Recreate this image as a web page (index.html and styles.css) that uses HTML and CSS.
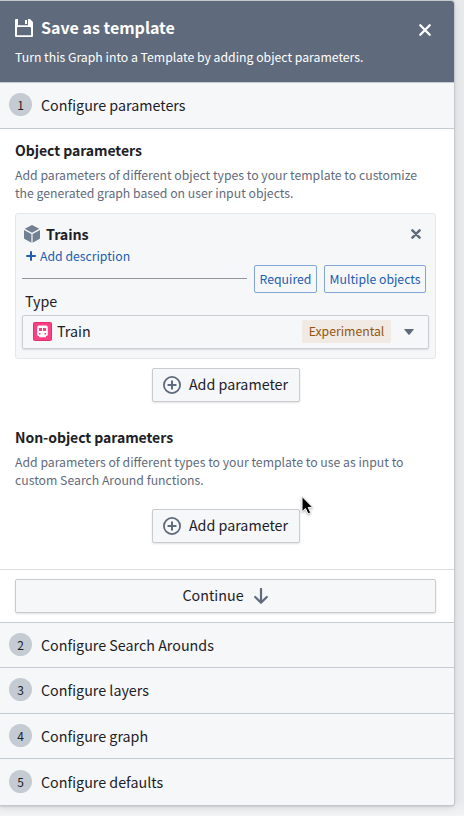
FILE: index.html
```
<!DOCTYPE html>
<html lang="en">
<head>
  <meta charset="UTF-8">
  <title>Save as template</title>
  <link rel="stylesheet" href="styles.css">
</head>
<body>
<div class="panel">
  <header class="panel-header">
    <div class="header-text">
      <h1>
        <svg class="save-icon" width="18" height="18" viewBox="0 0 18 18"><path fill="#fff" fill-rule="evenodd" d="M1 0h2v6.2h10V0h2l3 3v14a1 1 0 0 1-1 1H1a1 1 0 0 1-1-1V1a1 1 0 0 1 1-1zM2 9v7.2h14V9a1 1 0 0 0-1-1H3a1 1 0 0 0-1 1z"/><path fill="#fff" d="M10 1h2v4h-2z"/></svg>
        <span>Save as template</span>
      </h1>
      <p>Turn this Graph into a Template by adding object parameters.</p>
    </div>
    <button type="button" class="close-btn" aria-label="Close">
      <svg width="12" height="12" viewBox="0 0 12 12"><path d="M1.3 1.3l9.4 9.4M10.7 1.3l-9.4 9.4" stroke="#fff" stroke-width="2.3" stroke-linecap="round"/></svg>
    </button>
  </header>

  <div class="step"><span class="step-num">1</span>Configure parameters</div>

  <div class="step-body">
    <section class="object-params">
      <h2>Object parameters</h2>
      <p class="hint">Add parameters of different object types to your template to customize<br>the generated graph based on user input objects.</p>
      <div class="card">
        <div class="card-title">
          <svg width="16" height="18" viewBox="0 0 16 18"><path fill="#738091" d="M8 0l7.3 3.8L8 7.8.7 3.8zM0 4.9l7.4 4v8.8L.6 14a1.1 1.1 0 0 1-.6-1zM16 4.9l-7.4 4v8.8l6.8-3.7a1.1 1.1 0 0 0 .6-1z"/></svg>
          <span>Trains</span>
          <button type="button" class="remove-btn" aria-label="Remove">
            <svg width="10" height="10" viewBox="0 0 10 10"><path d="M1.4 1.4l7.2 7.2M8.6 1.4L1.4 8.6" stroke="#5f6b7c" stroke-width="2.5" stroke-linecap="round"/></svg>
          </button>
        </div>
        <a class="add-desc">
          <svg width="10" height="10" viewBox="0 0 10 10"><path d="M5 1v8M1 5h8" stroke="#215db0" stroke-width="2" stroke-linecap="round"/></svg>
          <span>Add description</span>
        </a>
        <div class="options">
          <span class="rule"></span>
          <span class="tag">Required</span>
          <span class="tag tag-wide">Multiple objects</span>
        </div>
        <label>Type</label>
        <div class="select">
          <svg width="19" height="19" viewBox="0 0 19 19"><rect width="19" height="19" rx="2" fill="#e52e72"/><rect x="1" y="1" width="17" height="17" rx="1" fill="#fb3f85"/><path fill="#fff" fill-rule="evenodd" d="M6 3.5h7A1.8 1.8 0 0 1 14.8 5.3v7.2a1.5 1.5 0 0 1-1.5 1.5H13v1.3H6V14h-.3a1.5 1.5 0 0 1-1.5-1.5V5.3A1.8 1.8 0 0 1 6 3.5zM6 6v3h3V6zm4 0v3h3V6zM6 11v1.5h1.5V11zm5.5 0v1.5H13V11z"/></svg>
          <span class="select-value">Train</span>
          <span class="badge">Experimental</span>
          <svg class="caret" width="10" height="6" viewBox="0 0 10 6"><path fill="#5f6b7c" d="M.8 0h8.4q.8 0 .4.7L5.6 5.6q-.6.6-1.2 0L.4.7Q0 0 .8 0z"/></svg>
        </div>
      </div>
      <button type="button" class="btn">
        <svg width="18" height="18" viewBox="0 0 18 18"><circle cx="9" cy="9" r="8.1" fill="none" stroke="#5f6b7c" stroke-width="1.8"/><path d="M9 5.3v7.4M5.3 9h7.4" stroke="#5f6b7c" stroke-width="2" stroke-linecap="round"/></svg>
        <span>Add parameter</span>
      </button>
    </section>

    <section class="other-params">
      <h2>Non-object parameters</h2>
      <p class="hint">Add parameters of different types to your template to use as input to<br>custom Search Around functions.</p>
      <button type="button" class="btn">
        <svg width="18" height="18" viewBox="0 0 18 18"><circle cx="9" cy="9" r="8.1" fill="none" stroke="#5f6b7c" stroke-width="1.8"/><path d="M9 5.3v7.4M5.3 9h7.4" stroke="#5f6b7c" stroke-width="2" stroke-linecap="round"/></svg>
        <span>Add parameter</span>
      </button>
    </section>
  </div>

  <div class="step-footer">
    <button type="button" class="btn btn-fill">
      <span>Continue</span>
      <svg width="14" height="16" viewBox="0 0 14 16"><path d="M7 1v13.5M1.2 9L7 14.6 12.8 9" fill="none" stroke="#5f6b7c" stroke-width="2.2" stroke-linecap="round" stroke-linejoin="round"/></svg>
    </button>
  </div>

  <div class="step"><span class="step-num">2</span>Configure Search Arounds</div>
  <div class="step"><span class="step-num">3</span>Configure layers</div>
  <div class="step"><span class="step-num">4</span>Configure graph</div>
  <div class="step"><span class="step-num">5</span>Configure defaults</div>
</div>

<svg class="cursor" width="16" height="22" viewBox="0 0 16 22"><path fill="#000" stroke="#fff" stroke-width="1" d="M2 1.5v15.2l3.5-3.3 2.5 5.5 2.7-1.2-2.5-5.3h4.6z"/></svg>
</body>
</html>
```

FILE: styles.css
```
html, body { margin: 0; padding: 0; }
body {
  height: 816px; overflow: hidden; position: relative; box-sizing: border-box; padding-top: 1px;
  background: linear-gradient(#e8e9eb 800px, #f3f4f5 816px); color: #1c2127; font-family: "Noto Sans CJK SC", "Open Sans", sans-serif; font-size: 14.3px;
}
h1, h2, p { margin: 0; }
button { font: inherit; color: inherit; cursor: pointer; }
svg { display: block; flex: none; }

.panel {
  width: 453.5px; height: 803.5px; background: #fff; border-radius: 0 3px 3px 0; overflow: hidden;
  box-shadow: 0 0 0 1px #c5c8cc, 0 1px 2px rgba(17,20,24,0.3), 0 2px 8px rgba(17,20,24,0.1);
}
.panel-header { display: flex; justify-content: space-between; height: 82px; background: #5f6b7c; color: #fff; border-bottom: 1px solid #c5cbd3; box-sizing: border-box; padding: 15px 22.5px 0 15px; }
.panel-header h1 { display: flex; align-items: center; gap: 8px; font-size: 16px; font-weight: 700; line-height: 24px; }
.panel-header h1 span { margin-top: -1px; }
.panel-header p { font-size: 12.25px; line-height: 18px; margin-top: 9px; white-space: nowrap; }
.close-btn, .remove-btn { background: none; border: none; padding: 0; }
.close-btn { height: 12px; margin-top: 8px; }

.step { display: flex; align-items: center; gap: 9px; height: 45.6px; box-sizing: border-box; padding: 0 0 1px 9px; background: #f6f7f9; border-bottom: 1px solid #c5cbd3; }
.step:last-child { border-bottom: none; }
.step-num { width: 23px; height: 23px; line-height: 23px; border-radius: 50%; background: #c5cbd3; text-align: center; font-size: 12px; }

.step-body { height: 441px; box-sizing: border-box; padding: 10px 17.5px 0 15px; border-bottom: 1px solid #dcdfe4; }
h2 { font-size: 14px; font-weight: 700; line-height: 22px; letter-spacing: -0.05px; }
.hint { font-size: 12.25px; line-height: 18px; color: #5f6b7c; margin-top: 5px; white-space: nowrap; }
.other-params { margin-top: 24px; }

.card { height: 146px; box-sizing: border-box; margin: 11px 0 9px; padding: 9px 6px 0; background: #f6f7f9; border: 1px solid #e5e8eb; border-radius: 3px; }
.card-title { display: flex; align-items: center; height: 22px; padding: 0 8px 0 2px; gap: 6px; font-weight: 700; letter-spacing: -0.1px; }
.remove-btn { margin-left: auto; }
.add-desc { display: flex; align-items: center; gap: 4px; height: 22px; padding-left: 4px; color: #215db0; font-size: 12.25px; }
.options { display: flex; gap: 7px; height: 28px; padding-right: 3px; margin-top: -2px; }
.rule { flex: 1; height: 1px; background: #919499; margin-top: 13px; }
.tag { box-sizing: border-box; width: 63px; height: 28px; line-height: 26px; text-align: center; border: 1px solid #82a5d8; border-radius: 2px; color: #215db0; font-size: 12.25px; white-space: nowrap; }
.tag-wide { width: 102px; }
.card label { display: block; height: 22px; line-height: 15px; padding-left: 3px; }

.select { display: flex; align-items: center; height: 34px; box-sizing: border-box; padding: 0 14px 0 10px; border: 1px solid #cbcdd0; border-radius: 2px; box-shadow: 0 1px 2px rgba(17,20,24,0.12); }
.select-value { margin: -2px 0 0 5px; }
.badge { margin-left: auto; width: 89px; height: 23px; line-height: 23px; text-align: center; background: #f1e9e3; color: #935610; border-radius: 2px; font-size: 12.25px; }
.caret { margin-left: 13px; }

.btn { display: flex; align-items: center; justify-content: center; gap: 8px; width: 148px; height: 34px; box-sizing: border-box; margin: 0 auto; padding: 0; background: #f6f7f9; border: 1px solid #c9cbce; border-radius: 2px; box-shadow: 0 1px 2px rgba(17,20,24,0.12); white-space: nowrap; }
.btn span { margin-top: -2px; }
.other-params .btn { margin-top: 20px; }
.btn-fill { width: 100%; gap: 10px; padding-right: 1px; }
.step-footer { height: 53px; box-sizing: border-box; padding: 9px 17.5px 0 15px; border-bottom: 1px solid #c5cbd3; }

.cursor { position: absolute; left: 300px; top: 495px; filter: drop-shadow(0 1px 1px rgba(0,0,0,0.3)); }
```
